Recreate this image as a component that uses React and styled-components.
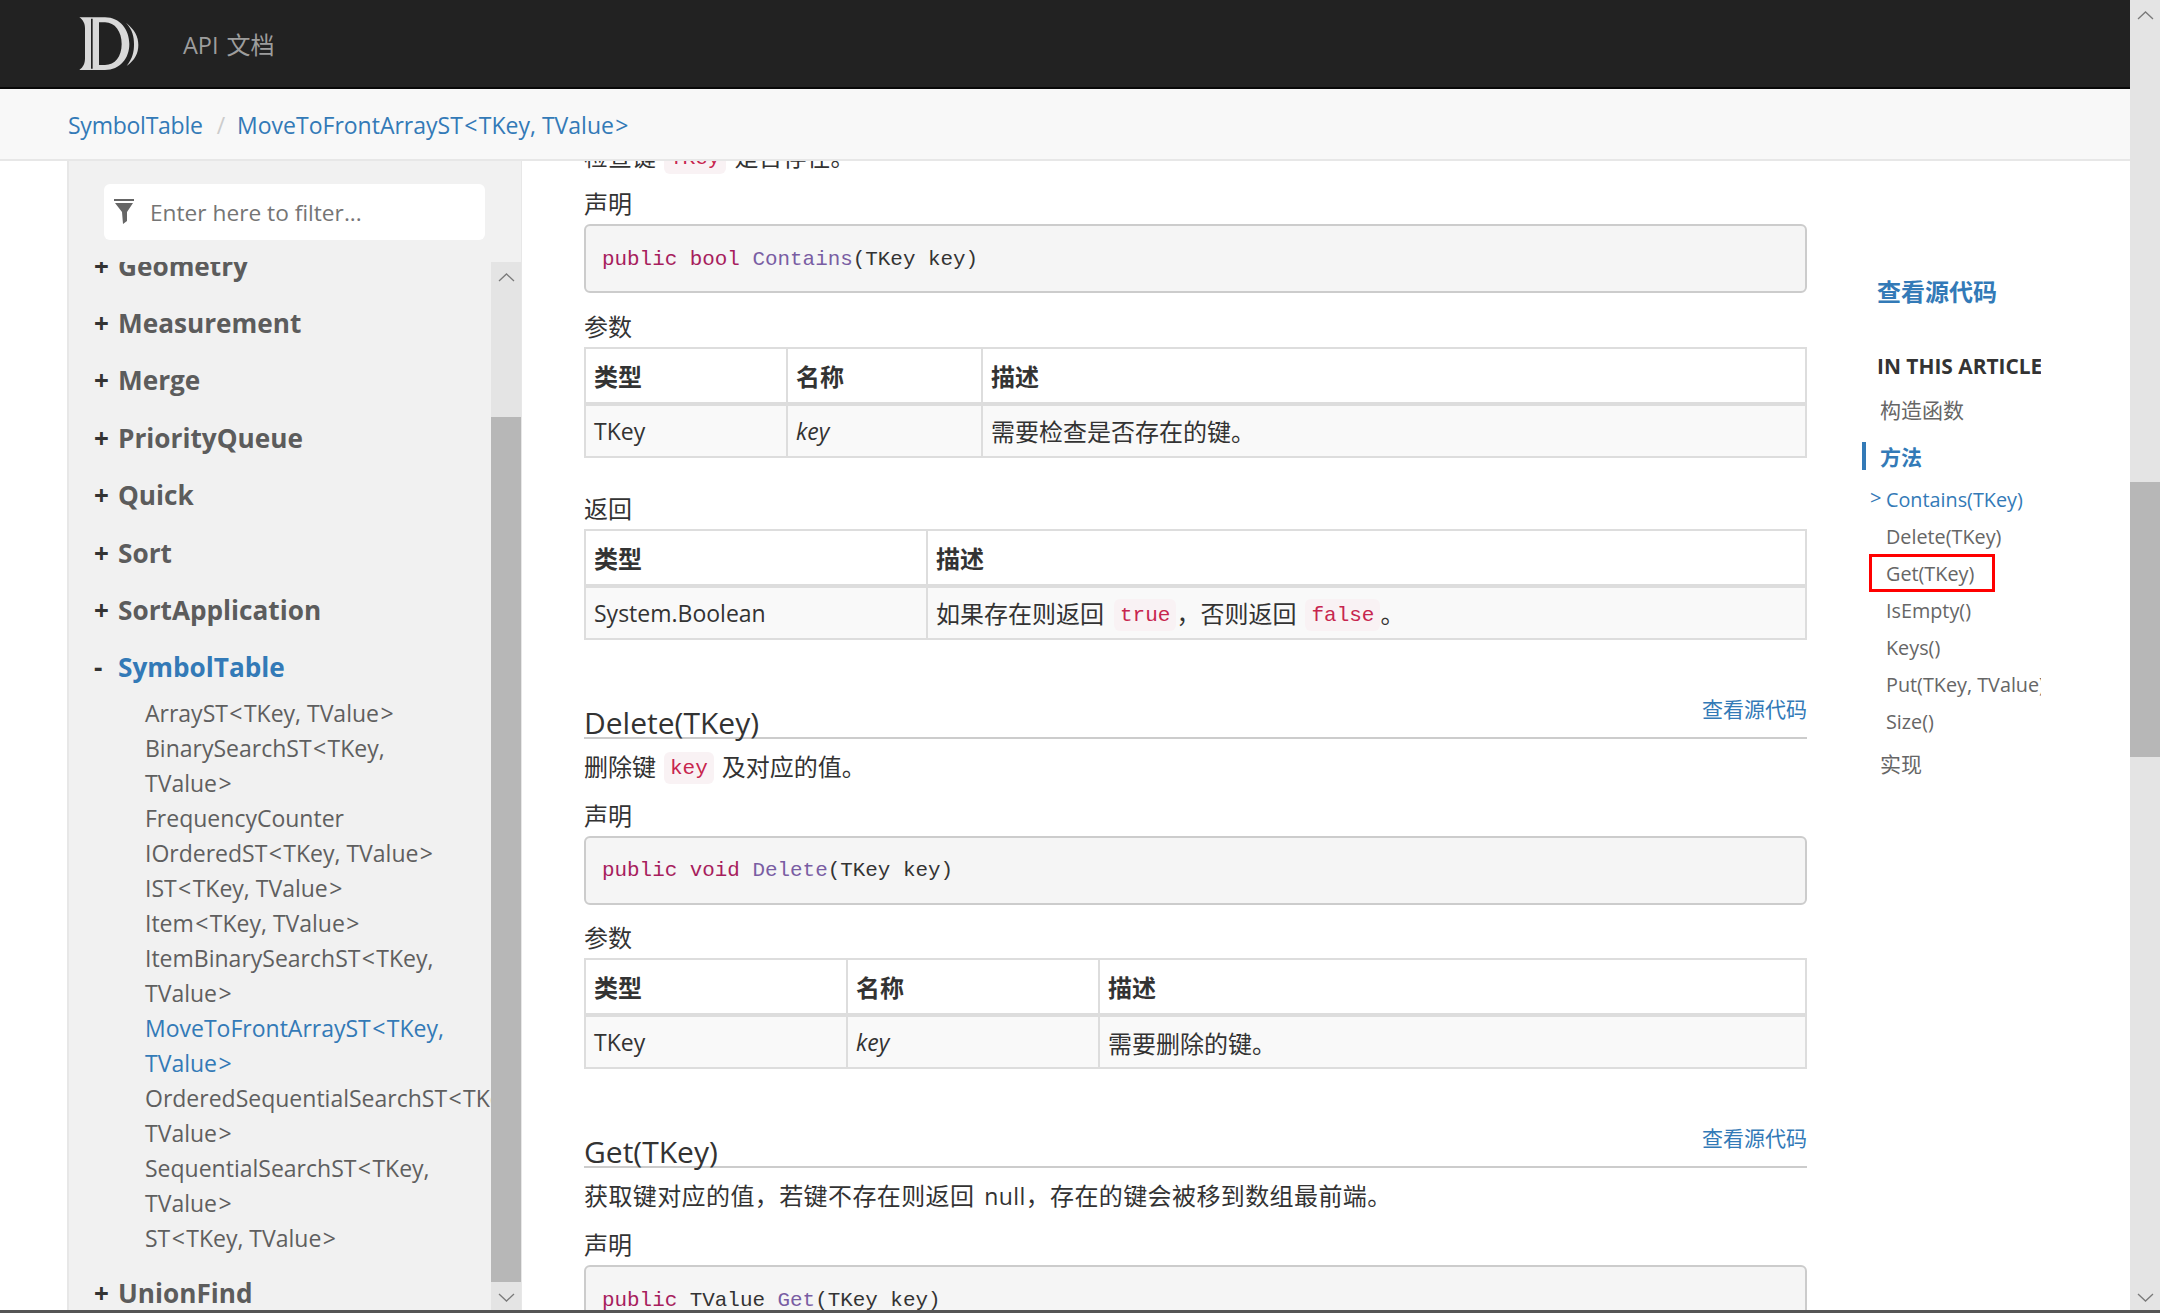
import React from "react";
import styled, { createGlobalStyle } from "styled-components";

const LATIN = `"Open Sans", "Noto Sans CJK SC", sans-serif`;
const CJK = `"Noto Sans CJK SC", "Open Sans", sans-serif`;
const MONO = `"Liberation Mono", "DejaVu Sans Mono", monospace`;

const Global = createGlobalStyle`
  html, body { margin: 0; height: 100%; overflow: hidden; background: #fff; }
  #root { height: 100%; }
  *, *::before, *::after { box-sizing: border-box; }
`;

const Screen = styled.div`
  height: 1313px;
  display: flex;
  flex-direction: column;
  color: #333;
  font-family: ${CJK};
  font-size: 24px;
`;
const Window = styled.div`
  flex: 1;
  min-height: 0;
  display: flex;
`;
const BottomEdge = styled.div`
  flex: none;
  height: 3px;
  background: #555;
`;
const Page = styled.div`
  flex: 1;
  min-width: 0;
  display: flex;
  flex-direction: column;
`;

/* scrollbars */
const Scrollbar = styled.div`
  flex: none;
  width: ${(p) => p.$w}px;
  display: flex;
  flex-direction: column;
  background: #e4e4e4;
`;
const ArrowSlot = styled.div`
  flex: none;
  height: 30px;
  display: flex;
  align-items: center;
  justify-content: center;
`;
const ArrowSlotEnd = styled.div`
  flex: 1;
  display: flex;
  align-items: flex-end;
  justify-content: center;
  padding-bottom: 8px;
`;
const Thumb = styled.div`
  flex: none;
  margin-top: ${(p) => p.$top}px;
  height: ${(p) => p.$h}px;
  background: #b7b7b7;
`;
const Chevron = ({ down }) => (
  <svg width="17" height="9" viewBox="0 0 17 9" fill="none" stroke="#7a7a7a" strokeWidth="1.3">
    <polyline points={down ? "1,1 8.5,8 16,1" : "1,8 8.5,1 16,8"} />
  </svg>
);

/* header */
const TopBar = styled.header`
  flex: none;
  height: 89px;
  background: #222;
  border-bottom: 2px solid #080808;
  display: flex;
  align-items: center;
  padding-left: 70px;
`;
const Logo = styled.svg`
  flex: none;
  width: 80px;
  height: 70px;
  margin-top: 3px;
`;
const Brand = styled.div`
  margin-left: 33px;
  color: #9d9d9d;
  font-size: 24px;
  font-family: ${CJK};
  display: flex;
  align-items: baseline;
  gap: 8px;
`;
const BrandLatin = styled.span`
  font-family: ${LATIN};
  font-size: 23.5px;
`;

/* breadcrumb */
const Crumbs = styled.nav`
  flex: none;
  height: 72px;
  background: #f8f8f8;
  border-bottom: 2px solid #e7e7e7;
  display: flex;
  align-items: center;
  padding: 2px 0 0 68px;
  font-family: ${LATIN};
  font-size: 23px;
`;
const Crumb = styled.a`
  color: #337ab7;
  letter-spacing: ${(p) => p.$ls || 0}px;
`;
const CrumbSep = styled.span`
  color: #ccc;
  margin: 0 12px 0 14px;
`;
const Bracket = styled.span`
  padding: 0 1.4px;
`;
const Generic = ({ text }) =>
  text.split(/([<>])/).map((part, i) =>
    part === "<" || part === ">" ? <Bracket key={i}>{part}</Bracket> : part
  );

const Body = styled.div`
  flex: 1;
  min-height: 0;
  display: flex;
  overflow: hidden;
`;

/* sidebar */
const Side = styled.aside`
  flex: none;
  width: 455px;
  margin-left: 67px;
  background: #f1f1f1;
  border-left: 2px solid #e7e7e7;
  border-right: 1px solid #e7e7e7;
  display: flex;
  flex-direction: column;
`;
const FilterWrap = styled.div`
  flex: none;
  height: 101px;
  padding: 23px 0 0 35px;
`;
const FilterBox = styled.label`
  width: 381px;
  height: 56px;
  background: #fff;
  border-radius: 6px;
  display: flex;
  align-items: center;
  padding-left: 10px;
`;
const FilterInput = styled.input`
  flex: 1;
  min-width: 0;
  margin-left: 14px;
  border: 0;
  outline: 0;
  background: none;
  padding: 0;
  font-family: ${LATIN};
  font-size: 22.7px;
  &::placeholder { color: #757575; opacity: 1; }
`;
const SideScrollRow = styled.div`
  flex: 1;
  min-height: 0;
  display: flex;
`;
const TreeClip = styled.div`
  flex: 1;
  min-width: 0;
  overflow: hidden;
`;
const Tree = styled.ul`
  list-style: none;
  margin: -25px 0 0;
  padding: 0;
`;
const TreeHead = styled.div`
  height: 57.4px;
  display: flex;
  align-items: center;
  padding-left: 25px;
  font-family: ${LATIN};
  font-weight: 700;
  font-size: 26.2px;
  color: ${(p) => (p.$active ? "#337ab7" : "#5c5c5c")};
`;
const TreeMark = styled.span`
  width: 24px;
  flex: none;
  color: #333;
  font-size: 26px;
`;
const SubList = styled.ul`
  list-style: none;
  margin: 0 0 8px;
  padding: 0 0 0 76px;
`;
const SubItem = styled.li`
  font-family: ${LATIN};
  font-size: 23px;
  color: ${(p) => (p.$active ? "#337ab7" : "#5f5f5f")};
`;
const SubLine = styled.div`
  line-height: 35px;
  white-space: nowrap;
`;

/* article */
const Article = styled.main`
  flex: none;
  width: 1285px;
  padding-left: 62px;
  overflow: hidden;
`;
const Para = styled.p`
  margin: ${(p) => p.$mt || 0}px 0 ${(p) => (p.$mb === undefined ? 15 : p.$mb)}px;
  line-height: 34px;
  white-space: nowrap;
  letter-spacing: ${(p) => p.$ls || 0}px;
`;
const Label = styled.div`
  line-height: 34px;
  margin-top: ${(p) => p.$mt || 0}px;
  margin-bottom: 4px;
`;
const Chip = styled.code`
  font-family: ${MONO};
  font-size: 21px;
  line-height: 1;
  vertical-align: 2.5px;
  background: #f9f2f4;
  color: #c7254e;
  border-radius: 6px;
  padding: 4.5px 6px;
  margin: ${(p) => p.$m || "0 8px"};
`;
const Latin = styled.span`
  font-family: ${LATIN};
  font-size: 23px;
  line-height: 1;
  margin-left: 4px;
`;
const CodeBox = styled.pre`
  margin: 0 0 15.5px;
  height: 69px;
  background: #f5f5f5;
  border: 2px solid #ccc;
  border-radius: 6px;
  padding: 1px 16px 0;
  display: flex;
  align-items: center;
  font-family: ${MONO};
  font-size: 20.9px;
  color: #333;
`;
const Keyword = styled.span`
  color: #a71d5d;
`;
const Fn = styled.span`
  color: #795da3;
`;
const DataTable = styled.table`
  width: 1223px;
  table-layout: fixed;
  border-collapse: collapse;
  margin: 0;
`;
const HeadCell = styled.th`
  height: 56px;
  border: 2px solid #ddd;
  border-bottom-width: 4px;
  padding: 0 8px;
  text-align: left;
  font-weight: 700;
`;
const Row = styled.tr`
  background: #f9f9f9;
`;
const Cell = styled.td`
  height: 53px;
  border: 2px solid #ddd;
  padding: 0 8px;
  white-space: nowrap;
  font-family: ${(p) => (p.$latin ? LATIN : CJK)};
  font-size: ${(p) => (p.$latin ? "23px" : "24px")};
  font-style: ${(p) => (p.$italic ? "italic" : "normal")};
`;
const MemberHead = styled.div`
  margin-top: 54px;
  height: 45px;
  border-bottom: 2px solid #ccc;
  display: flex;
  justify-content: space-between;
  align-items: flex-start;
  margin-bottom: 10px;
`;
const MemberTitle = styled.h4`
  margin: 0 0 -3px;
  align-self: flex-end;
  font-family: ${LATIN};
  font-weight: 400;
  font-size: 30px;
  line-height: 34px;
  color: #333;
`;
const SourceLink = styled.a`
  margin-top: -1px;
  font-size: 21px;
  line-height: 30px;
  color: #337ab7;
`;

/* toc */
const Toc = styled.aside`
  flex: none;
  width: 179px;
  margin-left: 55px;
  padding-top: 113px;
  overflow: hidden;
`;
const TocSource = styled.a`
  display: block;
  margin-left: 15px;
  font-size: 24px;
  font-weight: 700;
  line-height: 34px;
  color: #337ab7;
`;
const TocTitle = styled.div`
  margin: 43px 0 0 15px;
  font-family: ${LATIN};
  font-weight: 700;
  font-size: 20.9px;
  line-height: 30px;
  color: #333;
  white-space: nowrap;
`;
const TocEntry = styled.div`
  margin-top: ${(p) => p.$mt}px;
  height: ${(p) => (p.$active ? 28 : 30)}px;
  line-height: ${(p) => (p.$active ? 28 : 30)}px;
  font-size: 21px;
  font-weight: ${(p) => (p.$active ? 700 : 400)};
  color: ${(p) => (p.$active ? "#337ab7" : "#666")};
  padding-left: ${(p) => (p.$active ? 14 : 18)}px;
  border-left: ${(p) => (p.$active ? "4px solid #337ab7" : "0")};
`;
const TocMethods = styled.ul`
  list-style: none;
  margin: 11px 0 0;
  padding: 0 0 0 24px;
`;
const TocMethod = styled.li`
  position: relative;
  height: 37px;
  line-height: 37px;
  white-space: nowrap;
  font-family: ${LATIN};
  font-size: 19.8px;
  color: ${(p) => (p.$active ? "#337ab7" : "#666")};
  ${(p) => p.$active && `
    &::before {
      content: ">";
      position: absolute;
      left: -16px;
      top: -2px;
      font-size: 20px;
    }
  `}
  ${(p) => p.$marked && `
    &::after {
      content: "";
      position: absolute;
      left: -17px;
      top: -1px;
      width: 126px;
      height: 38px;
      border: 3px solid #f00;
    }
  `}
`;

const Table = ({ widths, heads, children }) => (
  <DataTable>
    <colgroup>
      {widths.map((w, i) => (
        <col key={i} style={w ? { width: w } : undefined} />
      ))}
    </colgroup>
    <thead>
      <tr>
        {heads.map((h) => (
          <HeadCell key={h}>{h}</HeadCell>
        ))}
      </tr>
    </thead>
    <tbody>
      <Row>{children}</Row>
    </tbody>
  </DataTable>
);

const navTop = ["Geometry", "Measurement", "Merge", "PriorityQueue", "Quick", "Sort", "SortApplication"];
const subs = [
  ["ArrayST<TKey, TValue>"],
  ["BinarySearchST<TKey,", "TValue>"],
  ["FrequencyCounter"],
  ["IOrderedST<TKey, TValue>"],
  ["IST<TKey, TValue>"],
  ["Item<TKey, TValue>"],
  ["ItemBinarySearchST<TKey,", "TValue>"],
  ["MoveToFrontArrayST<TKey,", "TValue>"],
  ["OrderedSequentialSearchST<TKey,", "TValue>"],
  ["SequentialSearchST<TKey,", "TValue>"],
  ["ST<TKey, TValue>"],
];
const methods = ["Contains(TKey)", "Delete(TKey)", "Get(TKey)", "IsEmpty()", "Keys()", "Put(TKey, TValue)", "Size()"];

export default function App() {
  return (
    <Screen>
      <Global />
      <Window>
        <Page>
          <TopBar>
            <Logo viewBox="0 0 240 210">
              <path
                fillRule="evenodd"
                fill="#d9d9d9"
                d="M28 22 L105 22 C150 22 178 60 178 102 C178 145 150 180 105 180 L28 180 C40 172 45 160 45 145 L45 55 C45 42 40 30 28 22 Z M87 37 L87 165 L105 165 C135 165 155 140 155 102 C155 65 135 37 105 37 Z"
              />
              <path fill="#222" d="M63 26 H68 V176 H63 Z" />
              <path
                fill="#d9d9d9"
                d="M168 38 C195 60 205 80 205 105 C205 130 195 150 170 168 C188 145 192 125 192 103 C192 80 188 60 168 38 Z"
              />
            </Logo>
            <Brand>
              <BrandLatin>API</BrandLatin>
              <span>文档</span>
            </Brand>
          </TopBar>
          <Crumbs>
            <Crumb $ls={-0.25}>SymbolTable</Crumb>
            <CrumbSep>/</CrumbSep>
            <Crumb>
              <Generic text="MoveToFrontArrayST<TKey, TValue>" />
            </Crumb>
          </Crumbs>
          <Body>
            <Side>
              <FilterWrap>
                <FilterBox>
                  <svg width="22" height="26" viewBox="0 0 22 26" fill="#666">
                    <rect x="0" y="0" width="20" height="2" />
                    <path d="M1 4 H19 L13 13 V22 L9 25 L8 13 Z" />
                  </svg>
                  <FilterInput placeholder="Enter here to filter..." />
                </FilterBox>
              </FilterWrap>
              <SideScrollRow>
                <TreeClip>
                  <Tree>
                    {navTop.map((n) => (
                      <li key={n}>
                        <TreeHead>
                          <TreeMark>+</TreeMark>
                          {n}
                        </TreeHead>
                      </li>
                    ))}
                    <li>
                      <TreeHead $active>
                        <TreeMark>-</TreeMark>
                        SymbolTable
                      </TreeHead>
                      <SubList>
                        {subs.map((lines) => (
                          <SubItem key={lines[0]} $active={lines[0].startsWith("MoveTo")}>
                            {lines.map((line) => (
                              <SubLine key={line}>
                                <Generic text={line} />
                              </SubLine>
                            ))}
                          </SubItem>
                        ))}
                      </SubList>
                    </li>
                    <li>
                      <TreeHead>
                        <TreeMark>+</TreeMark>
                        UnionFind
                      </TreeHead>
                    </li>
                  </Tree>
                </TreeClip>
                <Scrollbar $w={30}>
                  <ArrowSlot>
                    <Chevron />
                  </ArrowSlot>
                  <Thumb $top={125} $h={865} />
                  <ArrowSlotEnd>
                    <Chevron down />
                  </ArrowSlotEnd>
                </Scrollbar>
              </SideScrollRow>
            </Side>

            <Article>
              <Para $mt={-22} $mb={13}>
                检查键<Chip>TKey</Chip>是否存在。
              </Para>
              <Label>声明</Label>
              <CodeBox>
                <Keyword>public bool</Keyword>&nbsp;<Fn>Contains</Fn>(TKey key)
              </CodeBox>
              <Label>参数</Label>
              <Table widths={[202, 195, null]} heads={["类型", "名称", "描述"]}>
                <Cell $latin>TKey</Cell>
                <Cell $latin $italic>key</Cell>
                <Cell>需要检查是否存在的键。</Cell>
              </Table>
              <Label $mt={33}>返回</Label>
              <Table widths={[342, null]} heads={["类型", "描述"]}>
                <Cell $latin>System.Boolean</Cell>
                <Cell>
                  如果存在则返回<Chip $m="0 0 0 10px">true</Chip>，否则返回<Chip $m="0 0 0 9px">false</Chip>。
                </Cell>
              </Table>

              <MemberHead>
                <MemberTitle>Delete(TKey)</MemberTitle>
                <SourceLink>查看源代码</SourceLink>
              </MemberHead>
              <Para>
                删除键<Chip>key</Chip>及对应的值。
              </Para>
              <Label>声明</Label>
              <CodeBox>
                <Keyword>public void</Keyword>&nbsp;<Fn>Delete</Fn>(TKey key)
              </CodeBox>
              <Label>参数</Label>
              <Table widths={[262, 252, null]} heads={["类型", "名称", "描述"]}>
                <Cell $latin>TKey</Cell>
                <Cell $latin $italic>key</Cell>
                <Cell>需要删除的键。</Cell>
              </Table>

              <MemberHead>
                <MemberTitle>Get(TKey)</MemberTitle>
                <SourceLink>查看源代码</SourceLink>
              </MemberHead>
              <Para $ls={0.4}>
                获取键对应的值，若键不存在则返回 <Latin>null</Latin>，存在的键会被移到数组最前端。
              </Para>
              <Label>声明</Label>
              <CodeBox>
                <span>
                  <Keyword>public</Keyword> TValue <Fn>Get</Fn>(TKey key)
                </span>
              </CodeBox>
            </Article>

            <Toc>
              <TocSource>查看源代码</TocSource>
              <TocTitle>IN THIS ARTICLE</TocTitle>
              <TocEntry $mt={13}>构造函数</TocEntry>
              <TocEntry $mt={18} $active>方法</TocEntry>
              <TocMethods>
                {methods.map((m, i) => (
                  <TocMethod key={m} $active={i === 0} $marked={m.startsWith("Get")}>
                    {m}
                  </TocMethod>
                ))}
              </TocMethods>
              <TocEntry $mt={8}>实现</TocEntry>
            </Toc>
          </Body>
        </Page>
        <Scrollbar $w={30}>
          <ArrowSlot>
            <Chevron />
          </ArrowSlot>
          <Thumb $top={452} $h={275} />
          <ArrowSlotEnd>
            <Chevron down />
          </ArrowSlotEnd>
        </Scrollbar>
      </Window>
      <BottomEdge />
    </Screen>
  );
}
